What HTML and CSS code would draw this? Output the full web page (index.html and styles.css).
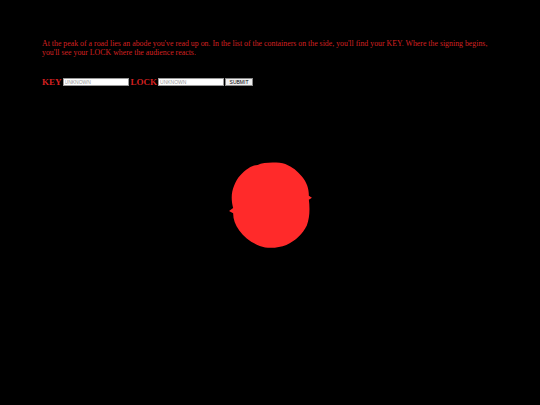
FILE: index.html
```html
<!DOCTYPE html>
<html>
<head>
<meta charset="utf-8">
<link rel="stylesheet" href="styles.css">
</head>
<body>
<div class="page">
  <p class="riddle">At the peak of a road lies an abode you've read up on. In the list of the containers on the side, you'll find your KEY. Where the signing begins, you'll see your LOCK where the audience reacts.</p>
  <form class="form">
    <label class="lbl">KEY</label>
    <input class="field" type="text" placeholder="UNKNOWN">
    <label class="lbl">LOCK</label>
    <input class="field" type="text" placeholder="UNKNOWN">
    <button class="btn" type="button">SUBMIT</button>
  </form>
  <div class="stage">
    <svg class="blob" width="88" height="88" viewBox="0 0 86 86">
      <path fill="#ff2a2a" d="M30 3 C36 0 50 0 57 2 C64 5 69 9 73 14 C78 20 80 26 80 33 L83 35 L80 37 C81 45 81 54 78 62 C74 70 67 77 58 81 C50 84 40 85 32 82 C24 79 17 74 12 67 C8 61 6 56 6 50 L2 48 L6 45 C4 37 4 30 7 23 C10 15 15 10 21 6 C24 4 27 3 30 3 Z"/>
    </svg>
  </div>
</div>
</body>
</html>
```
FILE: styles.css
```css
html, body {
  margin: 0;
  padding: 0;
  background: #000;
}
.page {
  padding: 39px 0 0 42px;
  width: 460px;
}
.riddle {
  margin: 0;
  font-family: "Liberation Serif", "Times New Roman", serif;
  font-size: 7.85px;
  line-height: 9px;
  color: #d42020;
}
.form {
  margin: 20px 0 0 0;
  display: flex;
  align-items: center;
  height: 10px;
}
.lbl {
  font-family: "Liberation Serif", serif;
  font-weight: bold;
  font-size: 9px;
  color: #d42020;
  margin-right: 1px;
}
.field {
  box-sizing: border-box;
  width: 66px;
  height: 8px;
  margin: 0 2px 0 0;
  padding: 0 1px;
  border: 0.5px solid #999;
  background: #fff;
  font-family: "Liberation Sans", Arial, sans-serif;
  font-size: 5px;
  color: #888;
  outline: none;
}
.field::placeholder {
  color: #999;
}
.btn {
  box-sizing: border-box;
  height: 8px;
  width: 28px;
  padding: 0;
  margin-left: -1px;
  border: 0.5px solid #888;
  background: #efefef;
  font-family: "Liberation Sans", Arial, sans-serif;
  font-size: 5px;
  color: #000;
  line-height: 6px;
}
.stage {
  margin: 75px 0 0 185px;
}
.blob {
  display: block;
}
```
